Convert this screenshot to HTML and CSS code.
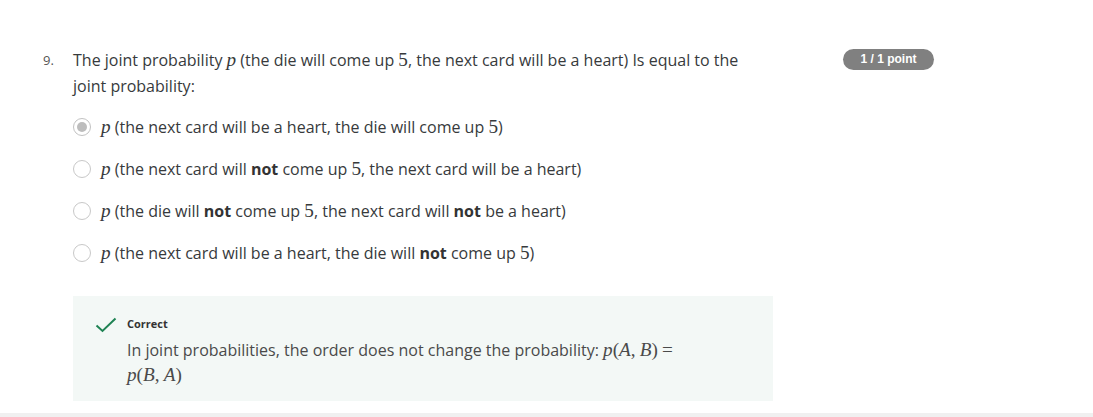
FILE: index.html
```html
<!DOCTYPE html>
<html>
<head>
<meta charset="utf-8">
<link rel="stylesheet" href="styles.css">
</head>
<body>
<div class="page">
  <div class="question">
    <div class="qnum">9.</div>
    <div class="qmain">
      <div class="qtext">The joint probability <span class="mi">p</span> (the die will come up <span class="mn">5</span>, the next card will be a heart) Is equal to the joint probability:</div>
      <div class="options">
        <div class="option">
          <span class="radio checked"><span class="dot"></span></span>
          <span class="otext"><span class="mi">p</span> (the next card will be a heart, the die will come up <span class="mn">5</span>)</span>
        </div>
        <div class="option">
          <span class="radio"></span>
          <span class="otext"><span class="mi">p</span> (the next card will <b>not</b> come up <span class="mn">5</span>, the next card will be a heart)</span>
        </div>
        <div class="option">
          <span class="radio"></span>
          <span class="otext"><span class="mi">p</span> (the die will <b>not</b> come up <span class="mn">5</span>, the next card will <b>not</b> be a heart)</span>
        </div>
        <div class="option">
          <span class="radio"></span>
          <span class="otext"><span class="mi">p</span> (the next card will be a heart, the die will <b>not</b> come up <span class="mn">5</span>)</span>
        </div>
      </div>
      <div class="feedback">
        <svg class="check" width="22" height="16" viewBox="0 0 22 16"><path d="M1.5 8.5 L7.5 14 L20.5 1.5" fill="none" stroke="#1f8354" stroke-width="2"/></svg>
        <div class="fbody">
          <div class="flabel">Correct</div>
          <div class="ftext">In joint probabilities, the order does not change the probability: <span class="math"><span class="mi">p</span><span class="mo">(</span><span class="mi">A</span><span class="mo">,</span>&nbsp;<span class="mi">B</span><span class="mo">)</span> <span class="mo">=</span></span> <span class="math"><span class="mi">p</span><span class="mo">(</span><span class="mi">B</span><span class="mo">,</span>&nbsp;<span class="mi">A</span><span class="mo">)</span></span></div>
        </div>
      </div>
    </div>
    <div class="badge">1 / 1 point</div>
  </div>
</div>
<div class="footer-strip"></div>
</body>
</html>
```
FILE: styles.css
```css
html, body {
  margin: 0;
  padding: 0;
  background: #ffffff;
}
body {
  font-family: "Open Sans", "Liberation Sans", sans-serif;
  color: #373a3c;
  height: 417px;
  display: flex;
  flex-direction: column;
}
.page {
  flex: 1;
}
.question {
  display: flex;
  align-items: flex-start;
  padding-top: 47px;
  padding-left: 43px;
}
.qnum {
  width: 30px;
  font-size: 13px;
  line-height: 24px;
  color: #555;
  padding-top: 1px;
}
.qmain {
  width: 700px;
}
.qtext {
  font-size: 16px;
  line-height: 26px;
  color: #373a3c;
}
.mi {
  font-family: "Liberation Serif", "DejaVu Serif", serif;
  font-style: italic;
  font-size: 1.2em;
  line-height: 1;
}
.mn, .mo {
  font-family: "Liberation Serif", "DejaVu Serif", serif;
  font-size: 1.2em;
  line-height: 1;
}
.options {
  margin-top: 7px;
  display: flex;
  flex-direction: column;
}
.option {
  display: flex;
  align-items: center;
  height: 42px;
  font-size: 16px;
  color: #373a3c;
}
.radio {
  width: 18px;
  height: 18px;
  border: 1.5px solid #c8c8c8;
  border-radius: 50%;
  box-sizing: border-box;
  margin-right: 10px;
  display: flex;
  align-items: center;
  justify-content: center;
  flex: none;
}
.radio.checked {
  border-color: #c2c2c2;
}
.dot {
  width: 10px;
  height: 10px;
  border-radius: 50%;
  background: #bdbdbd;
}
.otext b {
  font-weight: 700;
  color: #333;
}
.feedback {
  margin-top: 22px;
  background: #f3f8f6;
  height: 105px;
  box-sizing: border-box;
  padding: 21px 50px 0 22px;
  display: flex;
  align-items: flex-start;
}
.check {
  flex: none;
  margin-top: 0px;
  margin-right: 10px;
}
.flabel {
  font-size: 11px;
  font-weight: 700;
  color: #333;
  line-height: 14px;
}
.ftext {
  margin-top: 7px;
  font-size: 16px;
  line-height: 25px;
  color: #4a4a4a;
}
.math {
  display: inline-block;
}
.badge {
  margin-left: 70px;
  margin-top: 2px;
  background: #808080;
  color: #fff;
  font-family: "Liberation Sans", Arial, sans-serif;
  font-weight: 700;
  font-size: 12px;
  width: 91px;
  height: 21px;
  line-height: 21px;
  text-align: center;
  border-radius: 11px;
}
.footer-strip {
  height: 4px;
  background: #f0f0f0;
}
```
